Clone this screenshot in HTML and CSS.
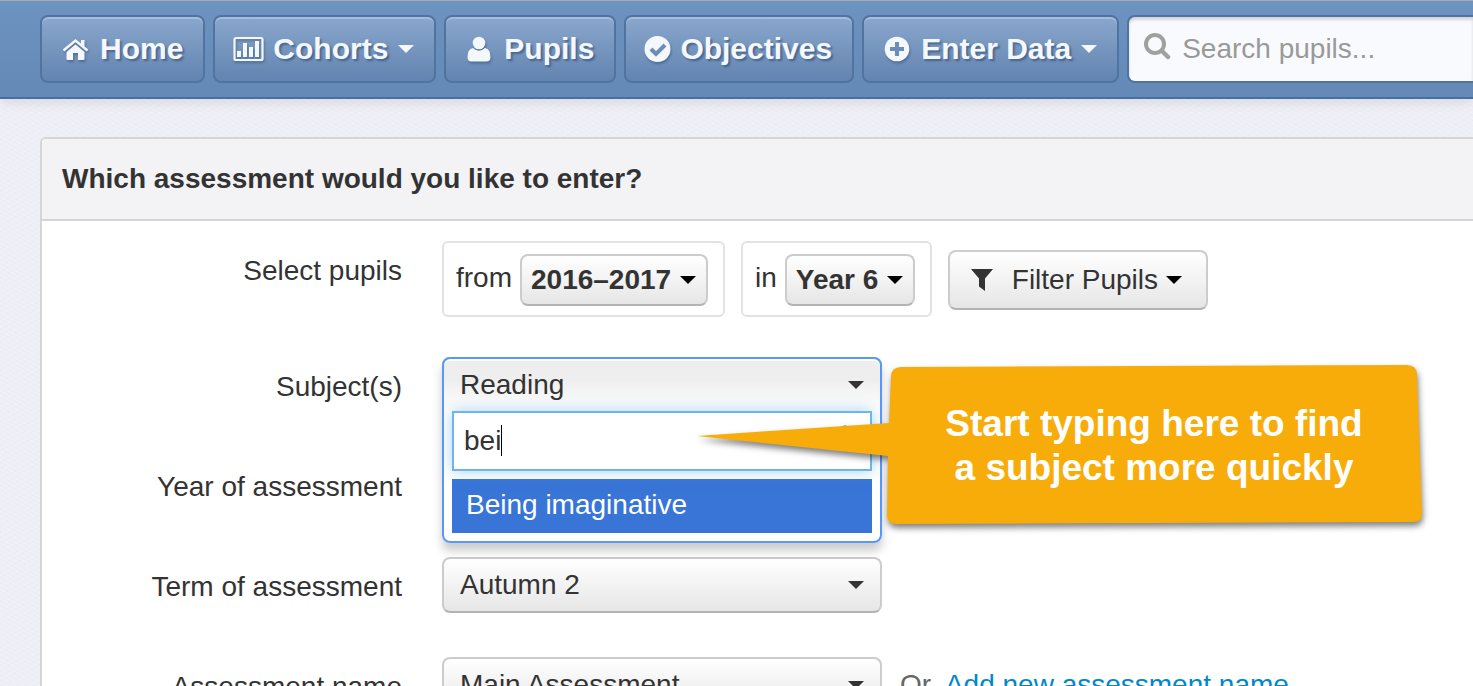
FILE: index.html
```html
<!DOCTYPE html>
<html lang="en-GB">
<head>
    <meta charset="UTF-8">
    <title>Enter Data</title>
    <link rel="stylesheet" href="styles.css">
</head>
<body>
    <nav class="navbar">
        <a class="nav-btn" href="#">
            <svg class="icon" width="29" height="24" viewBox="0 0 29 24"><path d="M14.5 7.500 L23.5 15 V22 Q23.500 23 22.500 23 H17 V16 H12 V23 H6.500 Q5.500 23 5.500 22 V15 Z"/><path d="M2.500 13.500 L14.500 3.500 L26.500 13.500" fill="none" stroke="currentColor" stroke-width="2.400"/><path d="M20 3 H23.500 V10 L20 7 Z"/></svg>
            Home
        </a>
        <button class="nav-btn" type="button">
            <svg class="icon" width="29" height="26" viewBox="1 0 29 26"><rect x="1.500" y="2" width="28" height="22" rx="1.500" fill="none" stroke="currentColor" stroke-width="2.200"/><path d="M4 15 H8 V21 H4 Z M10 7 H14 V21 H10 Z M16 11 H20 V21 H16 Z M22 5 H26 V21 H22 Z"/></svg>
            Cohorts
            <span class="caret"></span>
        </button>
        <a class="nav-btn" href="#">
            <svg class="icon" width="29" height="26" viewBox="0 0 29 26"><circle cx="14" cy="7" r="6.300"/><path d="M8 12 Q14 17.500 20 12 Q25.500 13 25.500 21 Q25.500 25.500 21.500 25.500 H6.500 Q2.500 25.500 2.500 21 Q2.500 13 8 12 Z"/></svg>
            Pupils
        </a>
        <a class="nav-btn" href="#">
            <svg class="icon" width="25" height="26" viewBox="0 0 25 26"><circle cx="12.500" cy="13" r="13"/><path class="cut" d="M6 13 L11 18 L20 9"/></svg>
            Objectives
        </a>
        <button class="nav-btn" type="button">
            <svg class="icon" width="28" height="26" viewBox="0 0 28 26"><circle cx="14" cy="13" r="12.300"/><path class="cut" d="M14 6 V20 M7 13 H21"/></svg>
            Enter Data
            <span class="caret"></span>
        </button>
        <div class="nav-search">
            <svg class="search-icon" width="28" height="28" viewBox="0 0 28 28"><circle cx="12" cy="12" r="9" fill="none" stroke="currentColor" stroke-width="4"/><path d="M19 19 L25 25" stroke="currentColor" stroke-width="4.500" stroke-linecap="round"/></svg>
            <input type="search" placeholder="Search pupils..." aria-label="Search pupils">
        </div>
    </nav>

    <main class="panel">
        <h1>Which assessment would you like to enter?</h1>
        <form class="form">
            <div class="row row-pupils">
                <span class="row-label">Select pupils</span>
                <div class="filters">
                    <div class="filter">
                        <label for="cohort">from</label>
                        <div class="select small">
                            <select id="cohort"><option>2016–2017</option></select>
                        </div>
                    </div>
                    <div class="filter">
                        <label for="yearGroup">in</label>
                        <div class="select small">
                            <select id="yearGroup"><option>Year 6</option></select>
                        </div>
                    </div>
                    <button class="filter-btn" type="button">
                        <svg width="24" height="24" viewBox="0 0 24 24"><path d="M1 1 H23 L15 10.500 V23 L9 18.500 V10.500 Z"/></svg>
                        Filter Pupils
                        <span class="caret"></span>
                    </button>
                </div>
            </div>

            <div class="row">
                <label class="row-label" for="subject">Subject(s)</label>
                <div class="control">
                    <div class="select">
                        <select id="subject"><option>Reading</option><option>Being imaginative</option></select>
                    </div>
                    <div class="chosen">
                        <button class="chosen-title" type="button">Reading <span class="caret"></span></button>
                        <div class="chosen-search">
                            <input type="text" value="bei" aria-label="Find a subject">
                            <span class="cursor"></span>
                            <svg width="18" height="18" viewBox="0 0 18 18"><circle cx="7" cy="7" r="5.500" fill="none" stroke="#555" stroke-width="2"/><path d="M11 11 L16 16" stroke="#555" stroke-width="3"/></svg>
                        </div>
                        <ul class="chosen-results">
                            <li>Being imaginative</li>
                        </ul>
                    </div>
                    <div class="callout">
                        <svg width="740" height="180" viewBox="0 0 740 180"><path d="M209 7 L715 5 Q725 5 725 15 L730 153 Q730 162 721 162 L205 164 Q195 164 195 155 L196 96 L5 76 L197 63 L199 17 Q199 7 209 7 Z"/></svg>
                        <p>Start typing here to find<br>a subject more quickly</p>
                    </div>
                </div>
            </div>

            <div class="row">
                <label class="row-label" for="year">Year of assessment</label>
                <div class="control select">
                    <select id="year"><option>2016–2017</option></select>
                </div>
            </div>

            <div class="row">
                <label class="row-label" for="term">Term of assessment</label>
                <div class="control select">
                    <select id="term"><option>Autumn 2</option></select>
                </div>
            </div>

            <div class="row">
                <label class="row-label" for="name">Assessment name</label>
                <div class="control select">
                    <select id="name"><option>Main Assessment</option></select>
                </div>
                <p class="extra">Or <a href="#">Add new assessment name</a></p>
            </div>
        </form>
    </main>
</body>
</html>
```
FILE: styles.css
```css
* {
    box-sizing: border-box;
}
body {
    margin: 0;
    overflow-x: hidden;
    background-color: #eeeef6;
    background-image:
        repeating-linear-gradient(30deg, rgba(255, 255, 255, 0.2) 0 1px, transparent 1px 4px),
        repeating-linear-gradient(-30deg, rgba(0, 0, 0, 0.01) 0 1px, transparent 1px 5px);
    color: #333;
    font-family: "Liberation Sans", Arial, sans-serif;
    font-size: 28px;
    line-height: 36px;
}
h1, p, ul {
    margin: 0;
    padding: 0;
}
button, input, select {
    font: inherit;
    color: inherit;
}
svg {
    fill: currentColor;
}

/* top bar */
.navbar {
    display: flex;
    gap: 8px;
    padding: 14px 0 14px 40px;
    border-top: 1px solid #aaa;
    border-bottom: 2px solid #456ea5;
    background: linear-gradient(#6d93c0, #6489b7);
    box-shadow: 0 2px 12px rgba(0, 0, 0, 0.12);
}
.nav-btn {
    display: flex;
    align-items: center;
    gap: 10px;
    flex: none;
    height: 68px;
    padding: 0 20px 0 19px;
    border: 2px solid #50749f;
    border-radius: 8px;
    background: linear-gradient(#8aa7cd, #6284b0);
    box-shadow: inset 0 2px 0 rgba(255, 255, 255, 0.25);
    color: #f4f8fc;
    font-size: 30px;
    font-weight: bold;
    text-decoration: none;
    text-shadow: 2px 2px 2px rgba(30, 60, 100, 0.5);
    white-space: nowrap;
}
.icon {
    overflow: visible;
    filter: drop-shadow(1px 2px 1px rgba(30, 60, 100, 0.4));
}
.cut {
    fill: none;
    stroke: #6b8db9;
    stroke-width: 4;
}
.caret {
    flex: none;
    border: 8px solid transparent;
    border-top-color: currentColor;
    border-bottom: 0;
}
.nav-search {
    display: flex;
    align-items: center;
    flex: 1;
    min-width: 200px;
    height: 68px;
    padding-left: 14px;
    border: 2px solid #50749f;
    border-right: 0;
    border-radius: 8px 0 0 8px;
    background: #f9fafd;
    box-shadow: inset 0 3px 3px rgba(0, 0, 0, 0.15);
}
.search-icon {
    color: #a0a0a0;
    margin-bottom: 6px;
}
.nav-search input {
    flex: 1;
    min-width: 0;
    padding: 0 0 0 11px;
    border: 0;
    background: none;
}
.nav-search input::placeholder {
    color: #999;
}

/* main panel */
.panel {
    margin: 38px 0 0 40px;
    border: 2px solid #d5d5d8;
    border-right: 0;
    border-radius: 6px 0 0 0;
    background: #fff;
}
h1 {
    padding: 22px 20px;
    border-bottom: 2px solid #d5d5d8;
    border-radius: 4px 0 0 0;
    background: #f3f3f6;
    font-size: 28px;
}
.form {
    padding: 20px 0;
}
.row {
    display: flex;
    margin-bottom: 44px;
}
.row-pupils {
    margin-bottom: 40px;
}
.row-label {
    flex: none;
    width: 360px;
    margin-right: 40px;
    padding-top: 12px;
    text-align: right;
}
.control {
    position: relative;
    width: 440px;
}
.filters {
    display: flex;
    align-items: flex-start;
    gap: 16px;
}
.filter {
    display: flex;
    gap: 8px;
    height: 76px;
    padding: 11px 15px 9px 12px;
    border: 2px solid #e2e2e2;
    border-radius: 6px;
    line-height: 48px;
}
.select {
    position: relative;
}
.select select {
    appearance: none;
    width: 100%;
    height: 56px;
    padding: 0 42px 0 16px;
}
.select select, .filter-btn {
    border: 2px solid #ccc;
    border-bottom-color: #b3b3b3;
    border-radius: 8px;
    background: linear-gradient(#fff, #e6e6e6);
}
.select::after {
    content: "";
    position: absolute;
    top: 24px;
    right: 18px;
    border: 8px solid transparent;
    border-top-color: #333;
    border-bottom: 0;
    pointer-events: none;
}
.select.small select {
    height: 52px;
    padding: 0 34px 0 9px;
    font-weight: bold;
}
.select.small::after {
    top: 22px;
    right: 12px;
    border-top-color: #000;
}
.filter-btn {
    display: flex;
    align-items: center;
    height: 60px;
    margin-top: 9px;
    padding: 0 24px 0 20px;
}
.filter-btn svg {
    margin-right: 18px;
}
.filter-btn .caret {
    margin-left: 8px;
    border-top-color: #000;
}

/* open subject list */
.chosen {
    position: absolute;
    top: 0;
    left: 0;
    z-index: 1;
    width: 100%;
    padding: 0 8px 8px;
    border: 2px solid #5897fb;
    border-radius: 8px;
    background: linear-gradient(#eee 0, #eee 20px, #fff 52px);
    box-shadow: inset 0 2px 0 #fff, 0 8px 10px rgba(0, 0, 0, 0.2);
}
.chosen-title {
    display: flex;
    align-items: center;
    justify-content: space-between;
    width: 100%;
    height: 52px;
    padding: 0 8px;
    border: 0;
    background: none;
}
.chosen-search {
    position: relative;
}
.chosen-search input {
    display: block;
    width: 100%;
    height: 60px;
    padding: 0 10px;
    border: 2px solid #6eb5ef;
    outline: 0;
    background: #fff;
    box-shadow: 0 0 14px rgba(82, 168, 236, 0.5);
}
.chosen-search .cursor {
    position: absolute;
    top: 14px;
    left: 49px;
    width: 1px;
    height: 31px;
    background: #000;
}
.chosen-search svg {
    position: absolute;
    top: 14px;
    right: 16px;
}
.chosen-results {
    margin-top: 8px;
    list-style: none;
}
.chosen-results li {
    padding: 8px 14px 10px;
    background: #3875d7;
    color: #fff;
}

.callout {
    position: absolute;
    top: 3px;
    left: 250px;
    z-index: 2;
    width: 740px;
    padding: 42px 13px 0 197px;
    color: #fff;
    font-size: 37px;
    font-weight: bold;
    line-height: 44px;
    text-align: center;
}
.callout svg {
    position: absolute;
    top: 0;
    left: 0;
    z-index: -1;
    overflow: visible;
    fill: #f8ac0a;
    filter: drop-shadow(1px 4px 3px rgba(0, 0, 0, 0.5));
}

.extra {
    padding: 10px 0 0 18px;
    color: #666;
}
.extra a {
    margin-left: 6px;
    color: #08c;
    text-decoration: none;
}
```
